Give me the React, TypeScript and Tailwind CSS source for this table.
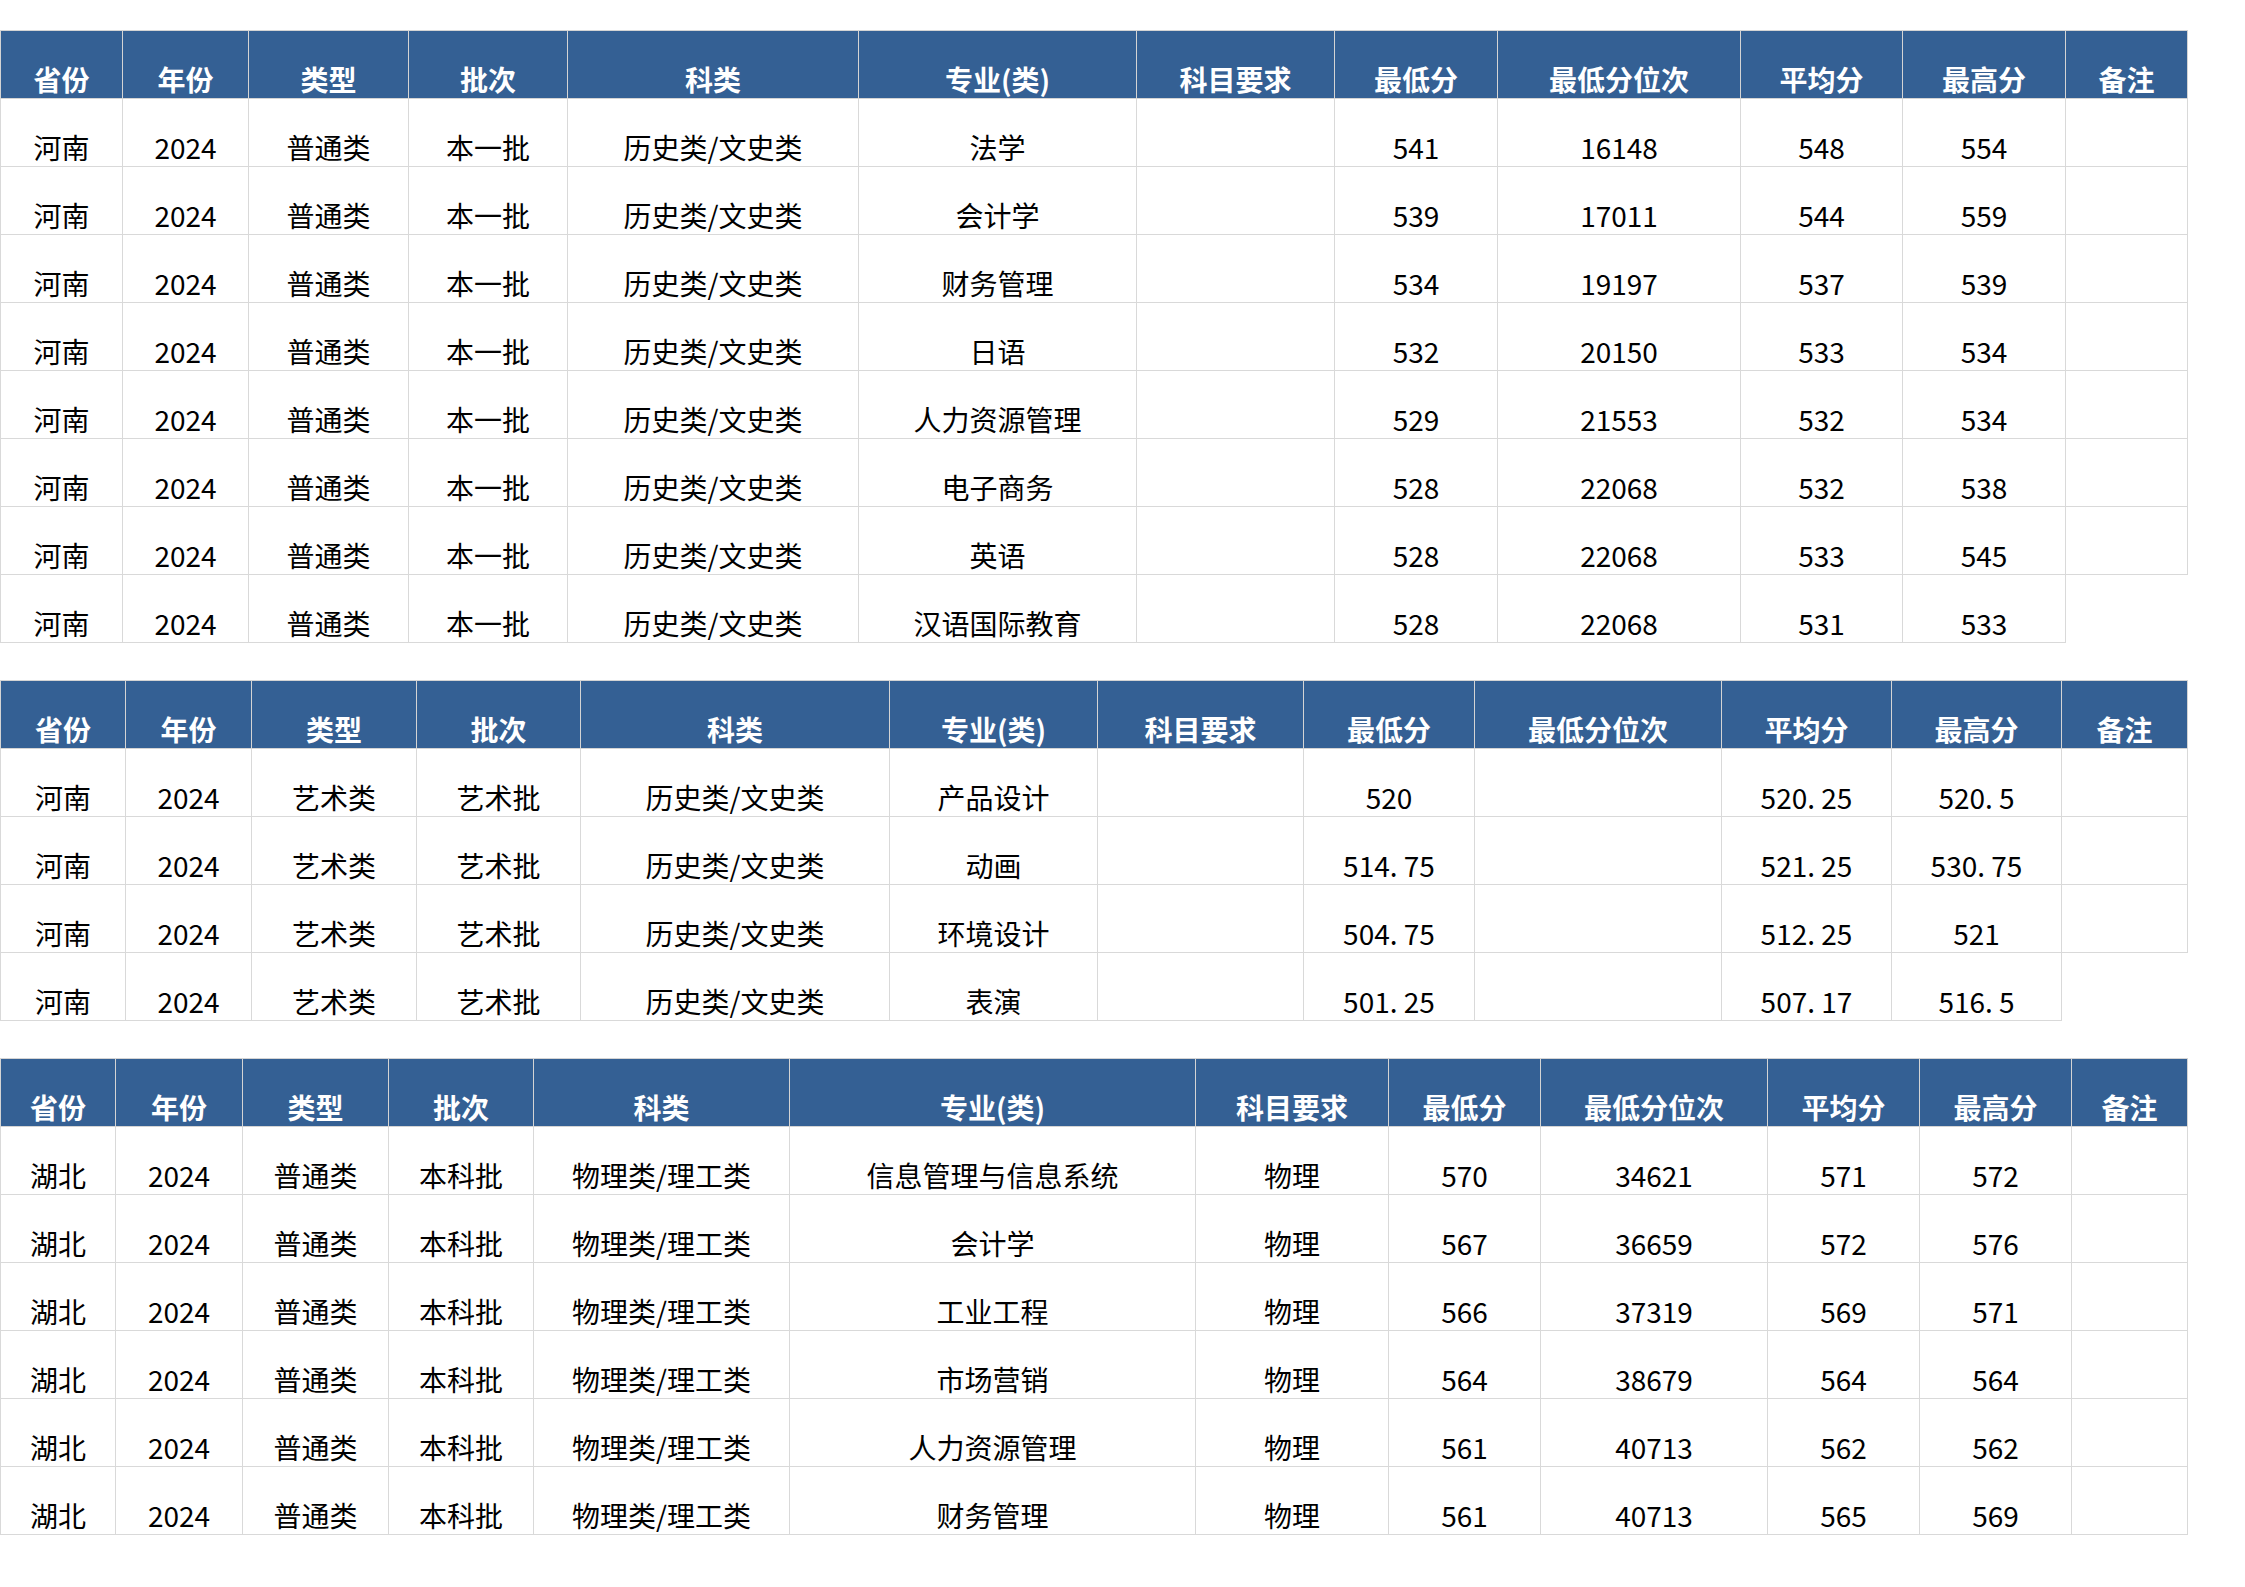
import React from "react";

type TableDef = {
  cols: string;
  rows: string[][];
  lastRowNoNote: boolean;
  mt: string;
};

const HEADERS = [
  "省份",
  "年份",
  "类型",
  "批次",
  "科类",
  "专业(类)",
  "科目要求",
  "最低分",
  "最低分位次",
  "平均分",
  "最高分",
  "备注",
];

const t1Base = ["河南", "2024", "普通类", "本一批", "历史类/文史类"];
const t2Base = ["河南", "2024", "艺术类", "艺术批", "历史类/文史类"];
const t3Base = ["湖北", "2024", "普通类", "本科批", "物理类/理工类"];

const tables: TableDef[] = [
  {
    cols: "grid-cols-[123px_126px_160px_159px_291px_278px_198px_163px_243px_162px_163px_122px]",
    mt: "mt-[30px]",
    lastRowNoNote: true,
    rows: [
      [...t1Base, "法学", "", "541", "16148", "548", "554", ""],
      [...t1Base, "会计学", "", "539", "17011", "544", "559", ""],
      [...t1Base, "财务管理", "", "534", "19197", "537", "539", ""],
      [...t1Base, "日语", "", "532", "20150", "533", "534", ""],
      [...t1Base, "人力资源管理", "", "529", "21553", "532", "534", ""],
      [...t1Base, "电子商务", "", "528", "22068", "532", "538", ""],
      [...t1Base, "英语", "", "528", "22068", "533", "545", ""],
      [...t1Base, "汉语国际教育", "", "528", "22068", "531", "533", ""],
    ],
  },
  {
    cols: "grid-cols-[126px_126px_165px_164px_309px_208px_206px_171px_247px_170px_170px_126px]",
    mt: "mt-[37px]",
    lastRowNoNote: true,
    rows: [
      [...t2Base, "产品设计", "", "520", "", "520. 25", "520. 5", ""],
      [...t2Base, "动画", "", "514. 75", "", "521. 25", "530. 75", ""],
      [...t2Base, "环境设计", "", "504. 75", "", "512. 25", "521", ""],
      [...t2Base, "表演", "", "501. 25", "", "507. 17", "516. 5", ""],
    ],
  },
  {
    cols: "grid-cols-[116px_127px_146px_145px_256px_406px_193px_152px_227px_152px_152px_116px]",
    mt: "mt-[37px]",
    lastRowNoNote: false,
    rows: [
      [...t3Base, "信息管理与信息系统", "物理", "570", "34621", "571", "572", ""],
      [...t3Base, "会计学", "物理", "567", "36659", "572", "576", ""],
      [...t3Base, "工业工程", "物理", "566", "37319", "569", "571", ""],
      [...t3Base, "市场营销", "物理", "564", "38679", "564", "564", ""],
      [...t3Base, "人力资源管理", "物理", "561", "40713", "562", "562", ""],
      [...t3Base, "财务管理", "物理", "561", "40713", "565", "569", ""],
    ],
  },
];

function Table({ t }: { t: TableDef }) {
  return (
    <div className={`grid w-[2188px] ${t.cols} ${t.mt}`}>
      {HEADERS.map((h, i) => (
        <div
          key={"h" + i}
          className={`flex h-[69px] items-end justify-center border-t border-b border-r border-[#d4d4d4] bg-[#346094] pb-[5px] text-[28px] font-bold leading-none text-white ${
            i === 0 ? "border-l" : ""
          }`}
        >
          {h}
        </div>
      ))}
      {t.rows.map((row, ri) =>
        row.map((cell, ci) => {
          const isLast = ri === t.rows.length - 1;
          const hidden = isLast && t.lastRowNoNote && ci === 11;
          return (
            <div
              key={ri + "-" + ci}
              className={
                hidden
                  ? "h-[68px]"
                  : `flex h-[68px] items-end justify-center border-b border-r border-[#d9d9d9] pb-[5px] text-[28px] leading-none text-black ${
                      ci === 0 ? "border-l" : ""
                    }`
              }
            >
              {hidden ? null : cell}
            </div>
          );
        })
      )}
    </div>
  );
}

export default function App() {
  return (
    <div
      className="min-h-[1587px] w-[2245px] bg-white"
      style={{ fontFamily: '"Noto Sans CJK SC", "Noto Sans", sans-serif' }}
    >
      {tables.map((t, i) => (
        <Table key={i} t={t} />
      ))}
    </div>
  );
}
